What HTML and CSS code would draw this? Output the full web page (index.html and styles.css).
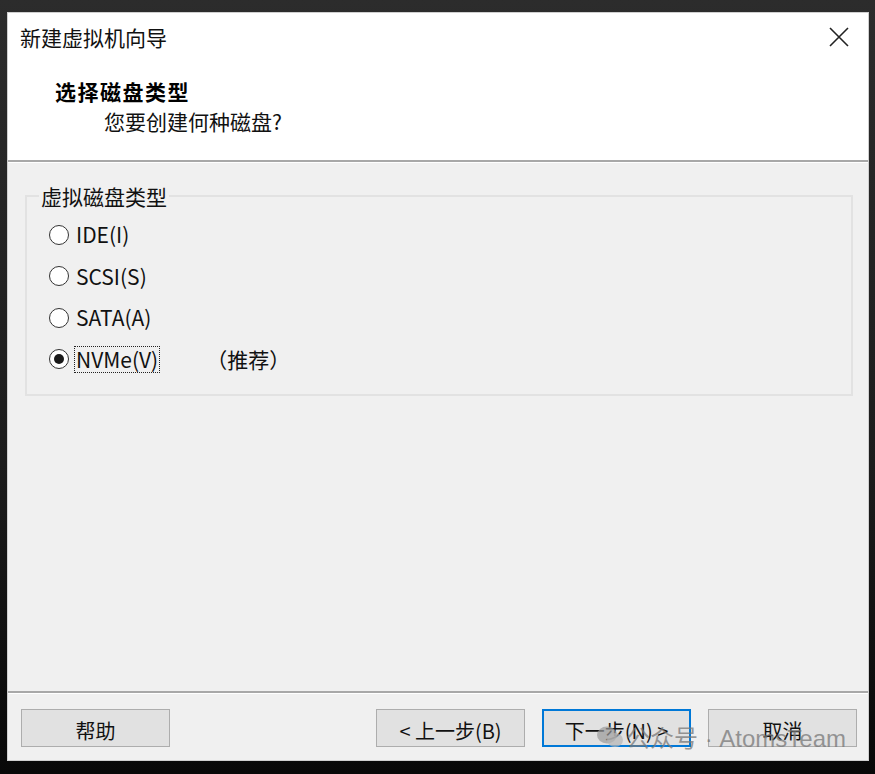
FILE: index.html
```html
<!DOCTYPE html>
<html lang="zh-CN">
<head>
<meta charset="utf-8">
<link rel="stylesheet" href="styles.css">
</head>
<body>
<div class="dialog">
  <div class="header">
    <div class="titlebar">
      <span class="title">新建虚拟机向导</span>
      <svg class="close" width="20" height="20" viewBox="0 0 20 20"><path d="M1 1 L19 19 M19 1 L1 19" stroke="#222" stroke-width="1.6" fill="none"/></svg>
    </div>
    <div class="heading">选择磁盘类型</div>
    <div class="subheading">您要创建何种磁盘?</div>
  </div>
  <div class="sep"></div>
  <div class="content">
    <fieldset class="group">
      <legend class="legend">虚拟磁盘类型</legend>
      <div class="opt"><span class="radio"></span><span class="lbl">IDE(I)</span></div>
      <div class="opt"><span class="radio"></span><span class="lbl">SCSI(S)</span></div>
      <div class="opt"><span class="radio"></span><span class="lbl">SATA(A)</span></div>
      <div class="opt"><span class="radio checked"></span><span class="lbl focus">NVMe(V)</span><span class="rec">（推荐）</span></div>
    </fieldset>
  </div>
  <div class="sep"></div>
  <div class="footer">
    <button class="btn">帮助</button>
    <div class="spacer"></div>
    <button class="btn">&lt; 上一步(B)</button>
    <button class="btn primary">下一步(N) &gt;</button>
    <button class="btn">取消</button>
  </div>
  <div class="watermark">
    <svg width="28" height="24" viewBox="0 0 28 24"><ellipse cx="11" cy="10" rx="10" ry="8.5" fill="#9a9a9a" opacity="0.7"/><ellipse cx="19" cy="15" rx="8" ry="7" fill="#b5b5b5" opacity="0.7"/></svg>
    <span>公众号 · AtomsTeam</span>
  </div>
</div>
</body>
</html>
```

FILE: styles.css
```css
html, body {
  margin: 0;
  padding: 0;
}
body {
  width: 875px;
  height: 774px;
  background: linear-gradient(to bottom, #2c2c2c 0%, #1c1c1c 60%, #080808 100%);
  font-family: "Noto Sans CJK SC", "Noto Sans", sans-serif;
  color: #000;
  overflow: hidden;
}
.dialog {
  position: relative;
  margin: 12px 0 0 7px;
  width: 862px;
  height: 749px;
  background: #f0f0f0;
  box-sizing: border-box;
  border: 1px solid #cfcfcf;
  display: flex;
  flex-direction: column;
}
.header {
  background: #fff;
  height: 147px;
  box-sizing: border-box;
  padding: 0 0 0 12px;
}
.titlebar {
  display: flex;
  align-items: center;
  justify-content: space-between;
  height: 48px;
  padding-right: 19px;
}
.title {
  font-size: 21px;
  line-height: 48px;
  color: #111;
}
.close {
  display: block;
}
.heading {
  margin-left: 35px;
  margin-top: 16px;
  font-size: 21px;
  font-weight: bold;
  line-height: 28px;
  letter-spacing: 1.5px;
}
.subheading {
  margin-left: 84px;
  margin-top: 2px;
  font-size: 21px;
  line-height: 28px;
  color: #111;
}
.sep {
  height: 3px;
  background: linear-gradient(to bottom, #a8a8a8 0, #a8a8a8 2px, #fff 2px);
}
.content {
  flex: 1;
  padding: 21px 15px 0 17px;
}
.group {
  margin: 0;
  height: 212px;
  box-sizing: border-box;
  border: 2px solid #e2e2e2;
  padding: 6px 0 0 22px;
}
.legend {
  font-size: 21px;
  line-height: 24px;
  padding: 0 2px;
  margin-left: -10px;
  color: #111;
}
.opt {
  display: flex;
  align-items: center;
  height: 41.5px;
  font-size: 21px;
  color: #111;
}
.radio {
  width: 18px;
  height: 18px;
  border: 1.6px solid #333;
  border-radius: 50%;
  background: #fff;
  box-sizing: content-box;
  margin-right: 5px;
  display: flex;
  align-items: center;
  justify-content: center;
}
.radio.checked::after {
  content: "";
  width: 10px;
  height: 10px;
  border-radius: 50%;
  background: #1a1a1a;
}
.lbl {
  padding: 0 1px;
  line-height: 25px;
  border: 1px solid transparent;
}
.lbl.focus {
  border: 1px dotted #222;
}
.rec {
  margin-left: 46px;
}
.footer {
  display: flex;
  align-items: flex-start;
  height: 66px;
  padding: 15px 11px 0 13px;
  box-sizing: border-box;
  gap: 17px;
}
.spacer {
  flex: 1;
}
.btn {
  width: 149px;
  height: 38px;
  background: #e1e1e1;
  border: 1.5px solid #adadad;
  font-family: "Noto Sans CJK SC", "Noto Sans", sans-serif;
  font-size: 20px;
  color: #111;
  padding: 4px 0 0 0;
  margin: 0;
}
.btn.primary {
  border: 2px solid #0078d7;
}
.watermark {
  position: absolute;
  right: 22px;
  bottom: 6px;
  display: flex;
  align-items: center;
  gap: 2px;
  font-family: "Liberation Sans", "Noto Sans CJK SC", sans-serif;
  font-size: 24px;
  color: rgba(120, 120, 120, 0.75);
  pointer-events: none;
}
```
